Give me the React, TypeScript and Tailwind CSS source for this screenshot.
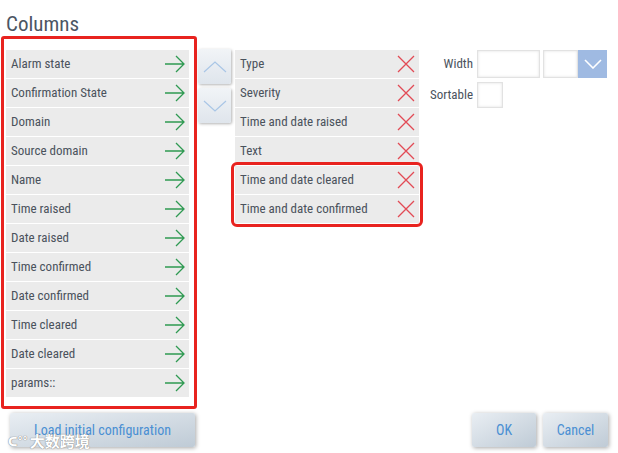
import React from "react";

const left = [
  "Alarm state",
  "Confirmation State",
  "Domain",
  "Source domain",
  "Name",
  "Time raised",
  "Date raised",
  "Time confirmed",
  "Date confirmed",
  "Time cleared",
  "Date cleared",
  "params::",
];

const right = ["Type", "Severity", "Time and date raised", "Text"];
const marked = ["Time and date cleared", "Time and date confirmed"];

const font = { fontFamily: '"Roboto Condensed", "Liberation Sans Narrow", "DejaVu Sans Condensed", Roboto, sans-serif' };

function Arrow() {
  return (
    <svg width="22" height="18" viewBox="0 0 22 18" fill="none" stroke="#2f9a52" strokeWidth="1.3">
      <path d="M1 9h19M12 1l8 8-8 8" />
    </svg>
  );
}

function Cross() {
  return (
    <svg width="20" height="20" viewBox="0 0 20 20" fill="none" stroke="#e24a55" strokeWidth="1.3">
      <path d="M2 2l16 16M18 2L2 18" />
    </svg>
  );
}

function Row({ label, icon }: { label: string; icon: React.ReactNode }) {
  return (
    <div className="flex h-[28px] items-center justify-between bg-[#ebebeb] pl-[5px] pr-[3px] text-[13px] text-[#4a525c]">
      <span>{label}</span>
      {icon}
    </div>
  );
}

function ArrowBtn({ up }: { up?: boolean }) {
  return (
    <div className="flex h-[35px] w-[33px] items-center justify-center rounded-[2px] bg-gradient-to-b from-[#f1f4f7] to-[#dfe5ec] shadow-[1px_1px_3px_rgba(0,0,0,0.3)]">
      <svg width="24" height="14" viewBox="0 0 24 14" fill="none" stroke="#a9c6e6" strokeWidth="1.2">
        <path d={up ? "M1 12L12 2l11 10" : "M1 2l11 10L23 2"} />
      </svg>
    </div>
  );
}

function Btn({ label, w }: { label: string; w: string }) {
  return (
    <div
      className={`${w} flex h-[34px] items-center justify-center rounded-[2px] bg-gradient-to-br from-[#e9eef3] to-[#bfcbd6] text-[14px] text-[#4a8fd3] shadow-[1px_1px_4px_rgba(0,0,0,0.35)]`}
    >
      {label}
    </div>
  );
}

export default function App() {
  return (
    <div className="relative h-[453px] w-[618px] bg-white" style={font}>
      <div className="pl-[6px] pt-[12px] text-[21px] leading-[24px] text-[#4b5563]">Columns</div>
      <div className="flex">
        <div className="ml-[1px] w-[196px] rounded-[3px] border-[3px] border-[#e8231f] pb-[9px] pl-[2px] pr-[5px] pt-[11px]">
          <div className="flex flex-col gap-[1px]">
            {left.map((l) => (
              <Row key={l} label={l} icon={<Arrow />} />
            ))}
          </div>
        </div>
        <div className="ml-[1px] flex flex-col gap-[4px] pt-[13px]">
          <ArrowBtn up />
          <ArrowBtn />
        </div>
        <div className="ml-[4px] flex w-[184px] flex-col gap-[1px] pt-[14px]">
          {right.map((l) => (
            <Row key={l} label={l} icon={<Cross />} />
          ))}
          <div className="flex flex-col gap-[1px] rounded-[2px] outline outline-[3px] outline-offset-[1px] outline-[#e8231f]">
            {marked.map((l) => (
              <Row key={l} label={l} icon={<Cross />} />
            ))}
          </div>
        </div>
        <div className="ml-[8px] flex flex-col gap-[4px] pt-[14px] text-[13px] text-[#4a525c]">
          <div className="flex items-center">
            <span className="w-[50px] pr-[4px] text-right">Width</span>
            <div className="h-[28px] w-[63px] border border-[#e2e2e2] shadow-[inset_0_0_3px_rgba(0,0,0,0.12)]" />
            <div className="ml-[3px] h-[28px] w-[35px] border border-[#e2e2e2] shadow-[inset_0_0_3px_rgba(0,0,0,0.12)]" />
            <div className="flex h-[28px] w-[29px] items-center justify-center bg-[#9fbae2]">
              <svg width="18" height="10" viewBox="0 0 18 10" fill="none" stroke="#fff" strokeWidth="1.6">
                <path d="M1 1l8 8 8-8" />
              </svg>
            </div>
          </div>
          <div className="flex items-center">
            <span className="w-[50px] pr-[4px] text-right">Sortable</span>
            <div className="h-[26px] w-[26px] border border-[#e2e2e2] shadow-[inset_0_0_3px_rgba(0,0,0,0.12)]" />
          </div>
        </div>
      </div>
      <div className="mt-[4px] flex justify-between pl-[10px] pr-[10px]">
        <Btn label="Load initial configuration" w="w-[185px]" />
        <div className="flex gap-[7px]">
          <Btn label="OK" w="w-[64px]" />
          <Btn label="Cancel" w="w-[65px]" />
        </div>
      </div>
      <div
        className="absolute left-[8px] top-[430px] flex items-center gap-[2px] text-[15px] font-bold text-white"
        style={{ textShadow: "0 0 1px #888, 0 0 1px #888" }}
      >
        <span className="text-[13px]">ᑕ°°</span>
        <span style={{ fontFamily: '"Noto Sans CJK SC", sans-serif' }}>大数跨境</span>
      </div>
    </div>
  );
}
